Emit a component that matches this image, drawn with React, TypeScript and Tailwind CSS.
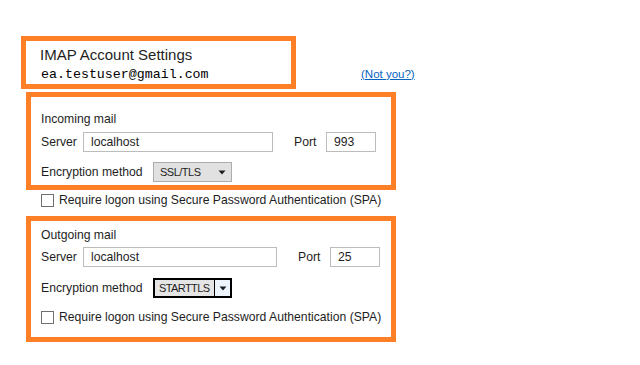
const ui = "font-['Liberation_Sans',Arial,sans-serif]";

const Caret = () => (
  <svg width="8" height="5" viewBox="0 0 8 5" className="block">
    <path d="M0.5 0.5 H7.5 L4 4.5 Z" fill="#1e1e1e" />
  </svg>
);

const TextBox = ({ value, width }: { value: string; width: string }) => (
  <div className={`${width} h-[20px] border border-[#bcbcbc] bg-white pl-[7px] flex items-center text-[#1e1e1e]`}>
    {value}
  </div>
);

const Check = ({ label }: { label: string }) => (
  <div className="flex items-center gap-[5px] text-[12.2px] text-[#1e1e1e]">
    <span className="w-[13px] h-[13px] border border-[#707070] bg-white" />
    <span>{label}</span>
  </div>
);

export default function App() {
  return (
    <div className={`w-[640px] h-[365px] bg-white overflow-hidden ${ui}`}>
      <div className="flex items-end pt-[36px] pl-[21px]">
        <div className="w-[275px] h-[53px] border-[5px] border-[#ff7f27] pl-[14px] pt-[4px]">
          <div className="text-[15px] leading-[20px] text-[#1f1f1f]">IMAP Account Settings</div>
          <div className="mt-[2px] font-['Liberation_Mono',monospace] text-[13.3px] leading-[16px] text-black pl-[1px]">
            ea.testuser@gmail.com
          </div>
        </div>
        <a href="#" className="ml-[65px] mb-[6px] text-[11.5px] text-[#0563c1] underline">
          (Not you?)
        </a>
      </div>

      {/* incoming */}
      <div className="ml-[26px] mt-[3px] w-[370px] h-[98px] border-[5px] border-[#ff7f27] pl-[10px] pt-[14px] text-[12.2px] leading-[16px] text-[#1e1e1e]">
        <div>Incoming mail</div>
        <div className="flex items-center mt-[5px]">
          <span className="w-[42px]">Server</span>
          <TextBox value="localhost" width="w-[190px]" />
          <span className="ml-[21px] w-[32px]">Port</span>
          <TextBox value="993" width="w-[50px]" />
        </div>
        <div className="flex items-center mt-[10px]">
          <span className="w-[112px]">Encryption method</span>
          <div className="w-[79px] h-[20px] border border-[#adadad] bg-[#e1e1e1] flex items-center justify-between pl-[6px] pr-[5px]">
            <span className="text-[11px] tracking-[-0.5px]">SSL/TLS</span>
            <Caret />
          </div>
        </div>
      </div>

      <div className="ml-[41px] h-[21px] flex items-center">
        <Check label="Require logon using Secure Password Authentication (SPA)" />
      </div>

      {/* outgoing */}
      <div className="ml-[26px] mt-[5px] w-[370px] h-[126px] border-[5px] border-[#ff7f27] pl-[10px] pt-[6px] text-[12.2px] leading-[16px] text-[#1e1e1e]">
        <div>Outgoing mail</div>
        <div className="flex items-center mt-[4px]">
          <span className="w-[42px]">Server</span>
          <TextBox value="localhost" width="w-[194px]" />
          <span className="ml-[21px] w-[32px]">Port</span>
          <TextBox value="25" width="w-[50px]" />
        </div>
        <div className="flex items-center mt-[11px]">
          <span className="w-[112px]">Encryption method</span>
          <div className="w-[79px] h-[20px] border-2 border-black flex">
            <div className="flex-1 bg-[#e5e5e5] flex items-center pl-[4px] text-[11px] tracking-[-0.6px]">STARTTLS</div>
            <div className="w-[16px] border-l border-black bg-[#eef4fb] flex items-center justify-center">
              <Caret />
            </div>
          </div>
        </div>
        <div className="mt-[11px]">
          <Check label="Require logon using Secure Password Authentication (SPA)" />
        </div>
      </div>
    </div>
  );
}
